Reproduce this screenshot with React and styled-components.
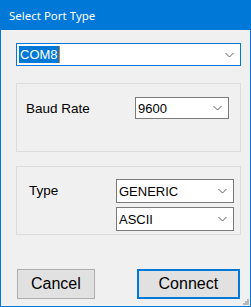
import React from 'react'
import styled, { createGlobalStyle, css } from 'styled-components';

const GlobalStyle = createGlobalStyle`
  html, body {
    margin: 0;
    padding: 0;
    background: #f0f0f0;
  }
`

const Window = styled.div`
  position: relative;
  box-sizing: border-box;
  width: 251px;
  height: 307px;
  background: #f0f0f0;
  border: 1px solid #0078d7;
  border-top: none;
  font-family: "Liberation Sans", Arial, sans-serif;
  color: #000;
  display: flex;
  flex-direction: column;
`

const TitleBar = styled.div`
  height: 30px;
  margin: 0 -1px;
  background: #0078d7;
  color: #fff;
  font-family: "Noto Sans", "Open Sans", sans-serif;
  font-size: 11.5px;
  display: flex;
  align-items: center;
  padding-left: 9px;
`

const Body = styled.div`
  display: flex;
  flex-direction: column;
  padding: 13px 10px 0 15px;
`

const ComboBox = styled.div`
  box-sizing: border-box;
  width: ${props => props.width}px;
  height: ${props => props.height || 22}px;
  background: #fff;
  border: 1px solid #7a7a7a;
  display: flex;
  align-items: center;
  justify-content: space-between;
  padding: 0 6px 0 2px;
  font-size: 13px;
  ${props => props.focused && css`
    border-color: #0078d7;
  `}
`

const Selected = styled.span`
  background: #0078d7;
  color: #fff;
  font-size: 13px;
  line-height: 17px;
  padding: 0 1px;
  border-right: 1px solid #e87722;
`

const Group = styled.div`
  box-sizing: border-box;
  height: 69px;
  margin-top: ${props => props.top}px;
  width: 225px;
  border: 1px solid #dcdcdc;
  display: grid;
  grid-template-columns: ${props => props.cols};
  align-content: start;
  row-gap: 4px;
  padding-top: ${props => props.padTop}px;
  padding-left: ${props => props.padLeft}px;
`

const Label = styled.div`
  font-size: 13.5px;
  height: 22px;
  display: flex;
  align-items: center;
`

const Buttons = styled.div`
  display: flex;
  gap: 42px;
  margin-top: 34px;
  padding-left: 1px;
`

const Button = styled.div`
  box-sizing: border-box;
  width: ${props => props.width}px;
  height: 30px;
  background: #e1e1e1;
  border: 1px solid #adadad;
  display: flex;
  align-items: center;
  justify-content: center;
  font-size: 16px;
  ${props => props.primary && css`
    border: 2px solid #0078d7;
  `}
`

const Grip = styled.svg`
  position: absolute;
  right: 1px;
  bottom: 1px;
`

function Chevron() {
  return (
    <svg width="9" height="6" viewBox="0 0 9 6">
      <path d="M0.5 1 L4.5 5 L8.5 1" fill="none" stroke="#606060" strokeWidth="1" />
    </svg>
  )
}

function Combo({value, width, focused, height}) {
  return (
    <ComboBox width={width} focused={focused} height={height}>
      {focused ? <Selected>{value}</Selected> : <span>{value}</span>}
      <Chevron />
    </ComboBox>
  )
}

export default function App() {
  return (
    <>
      <GlobalStyle />
      <Window>
        <TitleBar>Select Port Type</TitleBar>
        <Body>
          <Combo value="COM8" width={225} height={23} focused />
          <Group top={17} cols="109px 93px" padTop={13} padLeft={9}>
            <Label>Baud Rate</Label>
            <Combo value="9600" width={94} />
          </Group>
          <Group top={14} cols="87px 118px" padTop={12} padLeft={12}>
            <Label>Type</Label>
            <Combo value="GENERIC" width={118} height={24} />
            <div />
            <Combo value="ASCII" width={118} height={24} />
          </Group>
          <Buttons>
            <Button width={79}>Cancel</Button>
            <Button width={105} primary>Connect</Button>
          </Buttons>
        </Body>
        <Grip width="6" height="6" viewBox="0 0 6 6">
          <rect x="4" y="0" width="2" height="2" fill="#b8b8b8" />
          <rect x="2" y="2" width="2" height="2" fill="#b8b8b8" />
          <rect x="4" y="2" width="2" height="2" fill="#b8b8b8" />
          <rect x="0" y="4" width="2" height="2" fill="#b8b8b8" />
          <rect x="2" y="4" width="2" height="2" fill="#b8b8b8" />
          <rect x="4" y="4" width="2" height="2" fill="#b8b8b8" />
        </Grip>
      </Window>
    </>
  )
}
